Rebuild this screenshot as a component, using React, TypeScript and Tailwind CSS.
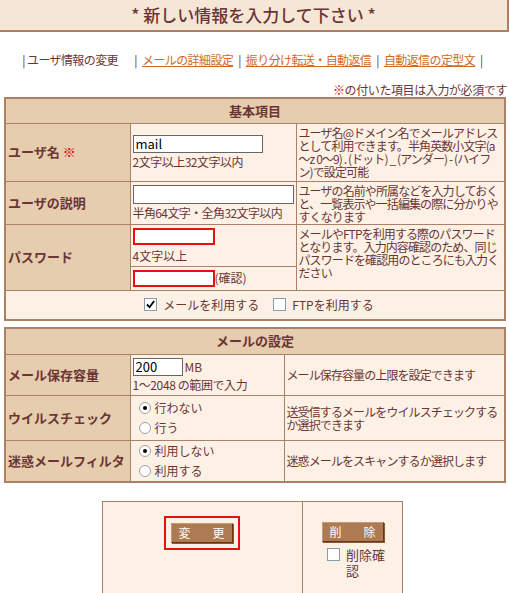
import React from "react";

const font = "font-['MS_PGothic','Noto_Sans_CJK_JP',sans-serif]";

const Label = ({ children, rowSpan }: { children: React.ReactNode; rowSpan?: number }) => (
  <td rowSpan={rowSpan} className="border border-[#a98068] bg-[#e5cdad] pl-[2px] text-[13px] font-bold text-[#6b3535]">
    {children}
  </td>
);

const Cell = ({ children, className = "", rowSpan }: { children?: React.ReactNode; className?: string; rowSpan?: number }) => (
  <td rowSpan={rowSpan} className={`border border-[#a98068] bg-[#fdf1e6] px-[2px] align-middle ${className}`}>{children}</td>
);

const Desc = ({ children, top }: { children: React.ReactNode; top?: boolean }) => (
  <td className={`border border-[#a98068] bg-[#fdf1e6] px-[2px] text-[12px] leading-[13px] tracking-[-0.9px] ${top ? "align-top pt-[2px]" : "align-middle"}`}>
    {children}
  </td>
);

const Radio = ({ checked, label }: { checked?: boolean; label: string }) => (
  <div className="flex h-[20px] items-center gap-[4px] pl-[6px]">
    <span className="flex h-[12px] w-[12px] items-center justify-center rounded-full border border-[#a0a0a0] bg-white">
      {checked && <span className="h-[4px] w-[4px] rounded-full bg-black" />}
    </span>
    <span>{label}</span>
  </div>
);

const Check = ({ checked }: { checked?: boolean }) => (
  <span className="inline-flex h-[13px] w-[13px] items-center justify-center border border-[#8a9ab0] bg-white">
    {checked && (
      <svg viewBox="0 0 10 10" className="h-[9px] w-[9px]">
        <path d="M1 5 L4 8 L9 1" stroke="#000" strokeWidth="2" fill="none" />
      </svg>
    )}
  </span>
);

const Btn = ({ children }: { children: React.ReactNode }) => (
  <span className="inline-flex h-[20px] w-[62px] items-center justify-center gap-[22px] border border-[#6a3517] border-t-[#c69a78] border-l-[#c69a78] bg-[#ae7a52] text-[12px] text-white shadow-[1px_1px_0_#8a5a3a]">
    {children}
  </span>
);

export default function App() {
  return (
    <div className={`${font} w-[509px] bg-white text-[12px] leading-[14px] text-[#6b3535]`}>
      <div className="flex h-[32px] items-center justify-center border-b-2 border-r-2 border-[#a98068] bg-[#f6e6d6] text-[17px] font-medium text-[#6b3535]">
        * 新しい情報を入力して下さい *
      </div>

      <div className="mt-[21px] flex justify-center gap-[5px] pr-[4px] text-[12px] tracking-[-0.6px] text-[#6b3535]">
        <span>| ユーザ情報の変更　</span>
        <span>|</span>
        <a className="text-[#d2691e] underline">メールの詳細設定</a>
        <span>|</span>
        <a className="text-[#d2691e] underline">振り分け転送・自動返信</a>
        <span>|</span>
        <a className="text-[#d2691e] underline">自動返信の定型文</a>
        <span>|</span>
      </div>

      <div className="mt-[16px] pr-[2px] text-right tracking-[-0.4px]">
        <span className="text-[#d00000]">※</span>の付いた項目は入力が必須です
      </div>

      <div className="px-[4px]">
        <table className="w-[500px] table-fixed border-collapse border-2 border-[#a98068]">
          <colgroup>
            <col className="w-[125px]" />
            <col className="w-[166px]" />
            <col className="w-[209px]" />
          </colgroup>
          <tbody>
            <tr className="h-[25px]">
              <td colSpan={3} className="border border-[#a98068] bg-[#e5cdad] text-center text-[13px] font-bold">
                基本項目
              </td>
            </tr>
            <tr className="h-[58px]">
              <Label>
                ユーザ名 <span className="text-[#d00000]">※</span>
              </Label>
              <Cell>
                <div className="flex h-[18px] w-[130px] items-center border border-[#666] bg-white px-[2px] text-[13px] text-black">mail</div>
                <div className="mt-[2px] tracking-[-0.5px]">2文字以上32文字以内</div>
              </Cell>
              <Desc top>
                ユーザ名@ドメイン名でメールアドレスとして利用できます。半角英数小文字(a～z 0～9) . (ドット) _ (アンダー) - (ハイフン)で設定可能
              </Desc>
            </tr>
            <tr className="h-[43px]">
              <Label>ユーザの説明</Label>
              <Cell>
                <div className="h-[19px] w-[161px] border border-[#666] bg-white" />
                <div className="mt-[2px] whitespace-nowrap tracking-[-0.6px]">半角64文字・全角32文字以内</div>
              </Cell>
              <Desc top>
                ユーザの名前や所属などを入力しておくと、一覧表示や一括編集の際に分かりやすくなります
              </Desc>
            </tr>
            <tr className="h-[42px]">
              <Label rowSpan={2}>パスワード</Label>
              <Cell>
                <div className="h-[17px] w-[82px] border-2 border-[#e81010] bg-white" />
                <div className="mt-[4px]">4文字以上</div>
              </Cell>
              <td rowSpan={2} className="border border-[#a98068] bg-[#fdf1e6] px-[2px] pt-[2px] align-top text-[12px] leading-[13px] tracking-[-0.9px]">
                メールやFTPを利用する際のパスワードとなります。入力内容確認のため、同じパスワードを確認用のところにも入力ください
              </td>
            </tr>
            <tr className="h-[24px]">
              <Cell>
                <div className="flex items-center">
                  <div className="h-[17px] w-[82px] border-2 border-[#e81010] bg-white" />
                  <span>(確認)</span>
                </div>
              </Cell>
            </tr>
            <tr className="h-[30px]">
              <td colSpan={3} className="border border-[#a98068] bg-[#fdf1e6]">
                <div className="flex items-center justify-center gap-[6px] pl-[8px]">
                  <Check checked />
                  <span>メールを利用する</span>
                  <span className="w-[2px]" />
                  <Check />
                  <span>FTPを利用する</span>
                </div>
              </td>
            </tr>
          </tbody>
        </table>

        <table className="mt-[6px] w-[500px] table-fixed border-collapse border-2 border-[#a98068]">
          <colgroup>
            <col className="w-[125px]" />
            <col className="w-[154px]" />
            <col className="w-[221px]" />
          </colgroup>
          <tbody>
            <tr className="h-[26px]">
              <td colSpan={3} className="border border-[#a98068] bg-[#e5cdad] text-center text-[13px] font-bold">
                メールの設定
              </td>
            </tr>
            <tr className="h-[41px]">
              <Label>メール保存容量</Label>
              <Cell>
                <div className="flex items-center gap-[2px]">
                  <div className="flex h-[18px] w-[50px] items-center border border-[#666] bg-white px-[2px] text-[13px] text-black">200</div>
                  <span>MB</span>
                </div>
                <div className="mt-[2px] tracking-[-0.4px]">1～2048 の範囲で入力</div>
              </Cell>
              <Desc>メール保存容量の上限を設定できます</Desc>
            </tr>
            <tr className="h-[45px]">
              <Label>ウイルスチェック</Label>
              <Cell>
                <Radio checked label="行わない" />
                <Radio label="行う" />
              </Cell>
              <Desc>送受信するメールをウイルスチェックするか選択できます</Desc>
            </tr>
            <tr className="h-[42px]">
              <Label>迷惑メールフィルタ</Label>
              <Cell>
                <Radio checked label="利用しない" />
                <Radio label="利用する" />
              </Cell>
              <Desc>迷惑メールをスキャンするか選択します</Desc>
            </tr>
          </tbody>
        </table>
      </div>

      <div className="mt-[18px] flex justify-center pr-[4px]">
        <table className="w-[300px] table-fixed border-collapse border border-[#a98068]">
          <colgroup>
            <col className="w-[200px]" />
            <col className="w-[100px]" />
          </colgroup>
          <tbody>
            <tr className="h-[92px]">
              <td className="border border-[#a98068] bg-[#fdf1e6] align-top">
                <div className="mt-[14px] flex justify-center pr-[2px]">
                  <div className="border-2 border-[#e81010] px-[5px] py-[5px]">
                    <Btn>
                      <span>変</span>
                      <span>更</span>
                    </Btn>
                  </div>
                </div>
              </td>
              <td className="border border-[#a98068] bg-[#fdf1e6] align-top">
                <div className="mt-[20px] flex justify-center">
                  <Btn>
                    <span>削</span>
                    <span>除</span>
                  </Btn>
                </div>
                <div className="mt-[5px] flex items-start gap-[6px] pl-[24px] text-[13px]">
                  <span className="mt-[1px] shrink-0">
                    <Check />
                  </span>
                  <span className="w-[40px] leading-[16px]">削除確認</span>
                </div>
              </td>
            </tr>
          </tbody>
        </table>
      </div>
    </div>
  );
}
